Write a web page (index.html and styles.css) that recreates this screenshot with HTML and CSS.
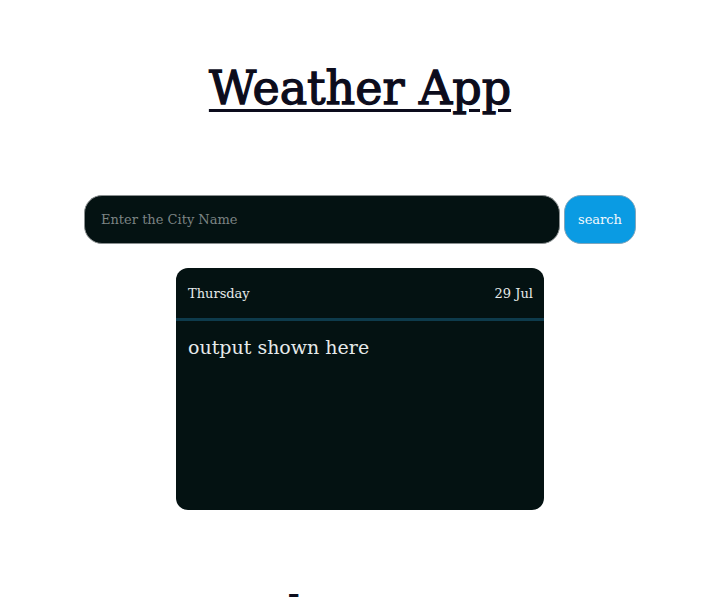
FILE: index.html
```html
<!DOCTYPE html>
<html lang="en">
<head>
<meta charset="utf-8">
<title>Weather App</title>
<link rel="stylesheet" href="styles.css">
</head>
<body>
<main class="app">
  <h1 class="title">Weather App</h1>
  <form class="search">
    <input class="search-input" type="text" placeholder="Enter the City Name">
    <button class="search-btn" type="button">search</button>
  </form>
  <section class="card">
    <header class="card-head">
      <span class="day">Thursday</span>
      <span class="date">29 Jul</span>
    </header>
    <div class="card-body">output shown here</div>
  </section>
  <h2 class="next">home</h2>
</main>
</body>
</html>
```

FILE: styles.css
```css
html, body {
  margin: 0;
  padding: 0;
  background: #ffffff;
}
body {
  font-family: "DejaVu Serif", "Liberation Serif", serif;
  color: #0c0c1c;
}
.app {
  display: flex;
  flex-direction: column;
  align-items: center;
}
.title {
  margin: 56px 0 0;
  font-size: 46px;
  line-height: 64px;
  font-weight: 400;
  -webkit-text-stroke: 1.3px #0c0c1c;
  text-decoration: underline;
  text-decoration-thickness: 3px;
  text-underline-offset: 5px;
  color: #0c0c1c;
}
.search {
  margin-top: 75px;
  display: flex;
  gap: 4px;
  align-items: center;
}
.search-input {
  box-sizing: border-box;
  width: 476px;
  height: 49px;
  border-radius: 18px;
  border: 1px solid #8a8f90;
  background: #041212;
  color: #cfd6d6;
  padding: 0 16px;
  font-family: inherit;
  font-size: 13px;
  outline: none;
}
.search-input::placeholder {
  color: #7c8484;
}
.search-btn {
  box-sizing: border-box;
  width: 72px;
  height: 49px;
  border-radius: 17px;
  border: 1px solid #7fa6bd;
  background: #0a9be3;
  color: #f2f8fc;
  font-family: inherit;
  font-size: 13px;
  padding: 0;
}
.card {
  margin-top: 24px;
  width: 368px;
  height: 242px;
  background: #041212;
  border-radius: 12px;
  color: #e6eaea;
  overflow: hidden;
}
.card-head {
  display: flex;
  justify-content: space-between;
  align-items: center;
  height: 50px;
  padding: 0 11px 0 12px;
  border-bottom: 3px solid #0e3b4c;
  font-size: 13px;
}
.card-body {
  padding: 15px 12px;
  font-size: 19px;
}
.next {
  margin: 76px 0 0 -16px;
  font-size: 46px;
  line-height: 56px;
  font-weight: 400;
  -webkit-text-stroke: 1.1px #0c0c1c;
}
```
